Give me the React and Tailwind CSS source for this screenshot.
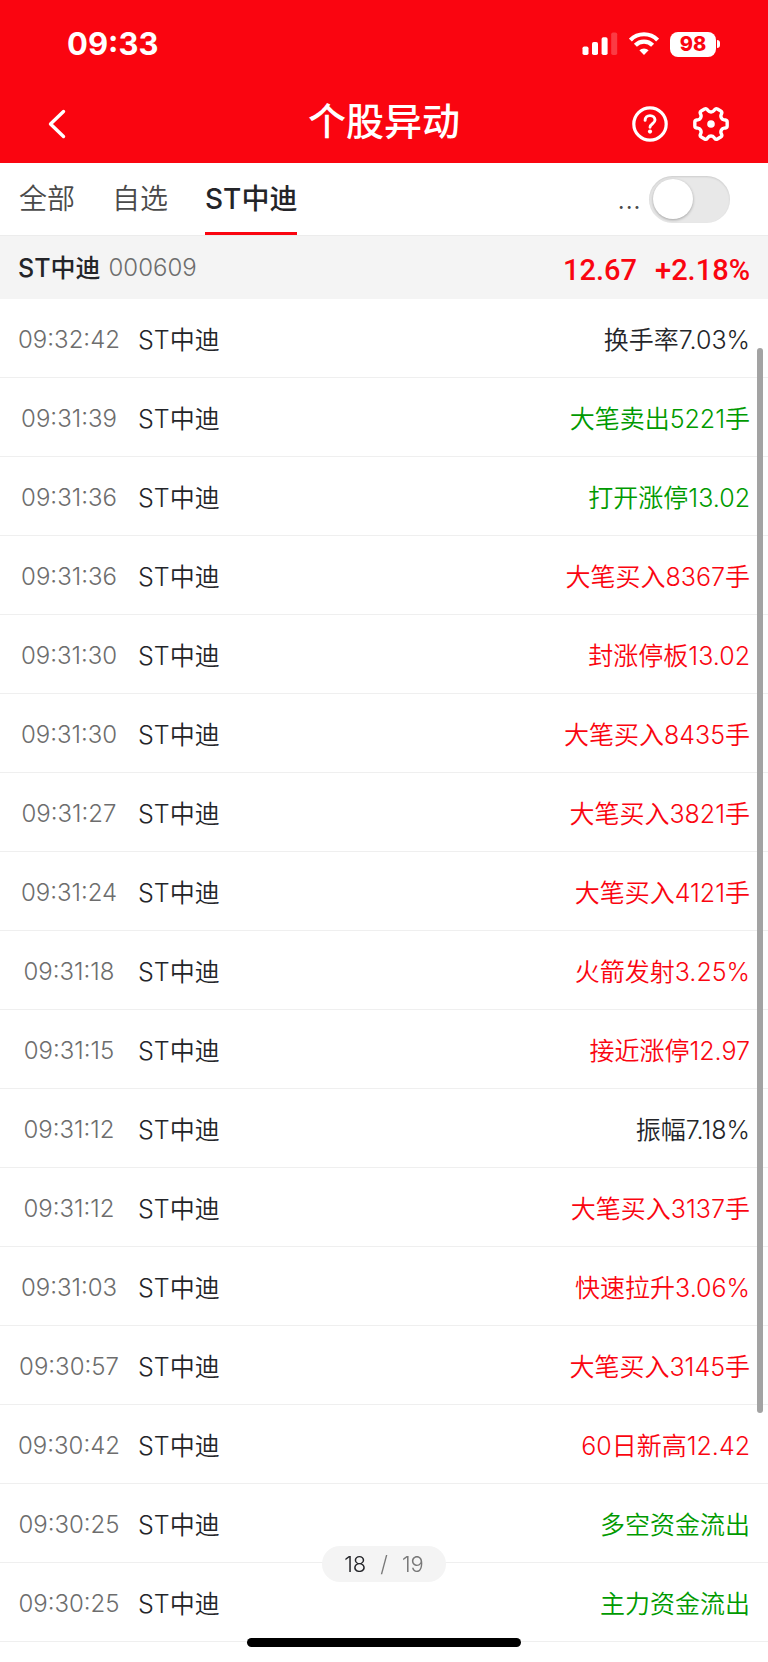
const EVENTS = [
  ["09:32:42", "换手率7.03%", "flat"],
  ["09:31:39", "大笔卖出5221手", "down"],
  ["09:31:36", "打开涨停13.02", "down"],
  ["09:31:36", "大笔买入8367手", "up"],
  ["09:31:30", "封涨停板13.02", "up"],
  ["09:31:30", "大笔买入8435手", "up"],
  ["09:31:27", "大笔买入3821手", "up"],
  ["09:31:24", "大笔买入4121手", "up"],
  ["09:31:18", "火箭发射3.25%", "up"],
  ["09:31:15", "接近涨停12.97", "up"],
  ["09:31:12", "振幅7.18%", "flat"],
  ["09:31:12", "大笔买入3137手", "up"],
  ["09:31:03", "快速拉升3.06%", "up"],
  ["09:30:57", "大笔买入3145手", "up"],
  ["09:30:42", "60日新高12.42", "up"],
  ["09:30:25", "多空资金流出", "down"],
  ["09:30:25", "主力资金流出", "down"],
];

const STOCK = { name: "ST中迪", code: "000609", price: "12.67", change: "+2.18%" };

const TONES = { flat: "text-[#242529]", up: "text-[#fa0510]", down: "text-[#009a00]" };

function SignalIcon() {
  return (
    <svg width="36" height="24" viewBox="0 0 36 24" fill="#fff" aria-hidden="true">
      <rect x="0.5" y="14.5" width="6" height="8.5" rx="1.8" />
      <rect x="10" y="10" width="6" height="13" rx="1.8" />
      <rect x="19.6" y="5.2" width="6" height="17.8" rx="1.8" />
      <rect x="29.2" y="0.4" width="6" height="22.6" rx="1.8" opacity="0.22" />
    </svg>
  );
}

function WifiIcon() {
  return (
    <svg width="30" height="24" viewBox="0 0 30 24" fill="none" stroke="#fff" aria-hidden="true">
      <path d="M1.4 8 A19 19 0 0 1 28.6 8" strokeWidth="4.2" />
      <path d="M6.4 13.2 A12 12 0 0 1 23.6 13.2" strokeWidth="4.2" />
      <path d="M15 23 L10.4 18.3 A6.6 6.6 0 0 1 19.6 18.3 Z" fill="#fff" stroke="none" />
    </svg>
  );
}

function GearIcon() {
  const teeth = [0, 60, 120, 180, 240, 300];
  const at = (r, deg) => [
    18 + r * Math.cos((deg * Math.PI) / 180),
    18 + r * Math.sin((deg * Math.PI) / 180),
  ];
  const pts = teeth.flatMap((a) => [at(12.2, a - 21), at(16.6, a - 13), at(16.6, a + 13), at(12.2, a + 21)]);
  const lerp = (p, q, d) => {
    const len = Math.hypot(q[0] - p[0], q[1] - p[1]);
    return [p[0] + ((q[0] - p[0]) * d) / len, p[1] + ((q[1] - p[1]) * d) / len];
  };
  const d = pts
    .map((p, i) => {
      const a = lerp(p, pts[(i + 23) % 24], 1.8);
      const b = lerp(p, pts[(i + 1) % 24], 1.8);
      return `${i ? "L" : "M"}${a.join(" ")} Q${p.join(" ")} ${b.join(" ")}`;
    })
    .join(" ");
  return (
    <svg width="36" height="36" viewBox="0 0 36 36" fill="none" aria-hidden="true">
      <path d={d + " Z"} stroke="#fff" strokeWidth="3.4" strokeLinejoin="round" />
      <circle cx="18" cy="18" r="3.8" fill="#fff" />
    </svg>
  );
}

function HelpIcon() {
  return (
    <svg width="36" height="36" viewBox="0 0 36 36" fill="none" stroke="#fff" strokeLinecap="round" aria-hidden="true">
      <circle cx="18" cy="18" r="16.2" strokeWidth="3.2" />
      <path d="M13.1 14.4 C13.1 11.3 15.3 9.6 18 9.6 C20.9 9.6 23 11.4 23 14.1 C23 17.6 18 17.9 18 21.3" strokeWidth="2.9" />
      <circle cx="18" cy="25.6" r="2.1" fill="#fff" stroke="none" />
    </svg>
  );
}

function Header() {
  return (
    <header className="bg-[#fa0510] text-white">
      <div className="flex h-[84px] items-center justify-between pt-1 pr-12 pl-[67px]">
        <span className="text-[31px] leading-9 font-bold">09:33</span>
        <div className="flex items-center gap-[11px]">
          <SignalIcon />
          <WifiIcon />
          <div className="flex items-center gap-px">
            <span className="flex h-[25px] w-[46px] items-center justify-center rounded-lg bg-white text-[20px] leading-6 font-extrabold text-[#fa0510]">
              98
            </span>
            <span className="h-2 w-[3px] rounded-r-full bg-white" />
          </div>
        </div>
      </div>
      <div className="grid h-[79px] grid-cols-[1fr_auto_1fr] items-center px-[39px]">
        <button type="button" aria-label="返回" className="flex size-9 items-center justify-center">
          <svg width="28" height="32" viewBox="0 0 28 32" fill="none" stroke="#fff" strokeWidth="3.4" strokeLinecap="round" strokeLinejoin="round" aria-hidden="true">
            <path d="M20.5 3.5 L7.5 16 L20.5 28.5" />
          </svg>
        </button>
        <h1 className="pb-1.5 text-[38px] leading-[48px] font-medium">个股异动</h1>
        <div className="flex justify-end gap-[25px]">
          <button type="button" aria-label="帮助"><HelpIcon /></button>
          <button type="button" aria-label="设置"><GearIcon /></button>
        </div>
      </div>
    </header>
  );
}

function Tabs() {
  const base = "flex h-full items-center border-y-[3px] border-transparent";
  return (
    <nav className="flex h-[72px] items-center justify-between pr-[38px] pl-[19px] text-[28px] leading-9">
      <div className="flex h-full gap-[37px]">
        <button type="button" className={`${base} font-[350] text-[#4a4a4a]`}>全部</button>
        <button type="button" className={`${base} font-[350] text-[#4a4a4a]`}>自选</button>
        <button type="button" aria-current="page" className={`${base} border-b-[#fa0510] font-medium text-[#242529]`}>
          ST中迪
        </button>
      </div>
      <label className="flex items-center gap-2 font-light text-[#4a4a4a]">
        <span>...</span>
        <input
          type="checkbox"
          role="switch"
          aria-label="..."
          className="flex h-[47px] w-[81px] appearance-none items-center rounded-full bg-[#e8e8e8] px-1 shadow-[inset_0_1px_2px_rgba(0,0,0,0.12)] before:size-10 before:rounded-full before:bg-white before:shadow-[0_1px_3px_rgba(0,0,0,0.3)] before:content-[''] checked:justify-end checked:bg-[#fa0510]"
        />
      </label>
    </nav>
  );
}

function StockBar() {
  return (
    <section className="flex h-16 items-center justify-between border-t border-[#ececec] bg-[#f4f4f4] px-[18px]">
      <div className="flex items-center gap-2 text-[25px] leading-8">
        <h2 className="font-medium text-[#242529]">{STOCK.name}</h2>
        <span className="text-2xl font-[350] text-[#6d6d6d]">{STOCK.code}</span>
      </div>
      <div className="flex gap-[18px] pt-1 font-[Roboto,sans-serif] text-[29px] leading-9 font-medium text-[#fa0510]">
        <span>{STOCK.price}</span>
        <span>{STOCK.change}</span>
      </div>
    </section>
  );
}

function EventList() {
  return (
    <section className="relative">
      <table className="w-full border-separate border-spacing-0 text-[25px] leading-8">
        <tbody>
          {EVENTS.map(([time, text, tone], i) => (
            <tr key={i} className="h-[79px] *:border-b *:border-[#efefef] *:p-0 *:pt-[3px]">
              <td className="w-[138px] text-center text-2xl font-[350] text-[#6d6d6d]">{time}</td>
              <td className="font-[350] text-[#242529]">{STOCK.name}</td>
              <td className={`text-right font-[350] ${TONES[tone]}`}>
                <span className="pr-[18px]">{text}</span>
              </td>
            </tr>
          ))}
        </tbody>
      </table>
      <div className="absolute top-[49px] right-[5px] bottom-[229px] w-[6px] rounded-full bg-[#a3a3a3]" />
    </section>
  );
}

export default function App() {
  return (
    <main className="min-h-screen bg-white font-['Inter','Noto_Sans_CJK_SC',sans-serif]">
      <Header />
      <Tabs />
      <StockBar />
      <EventList />
      <div className="pointer-events-none fixed inset-x-0 bottom-[15px] flex flex-col items-center gap-[56px]">
        <div className="flex h-9 items-center gap-[14px] rounded-full bg-[#f4f4f4] px-[22px] text-[22px] leading-7 font-[350] text-[#777777]">
          <span className="text-[#242529]">18</span>
          <span>/</span>
          <span>19</span>
        </div>
        <div className="h-[9px] w-[274px] rounded-full bg-black" />
      </div>
    </main>
  );
}
